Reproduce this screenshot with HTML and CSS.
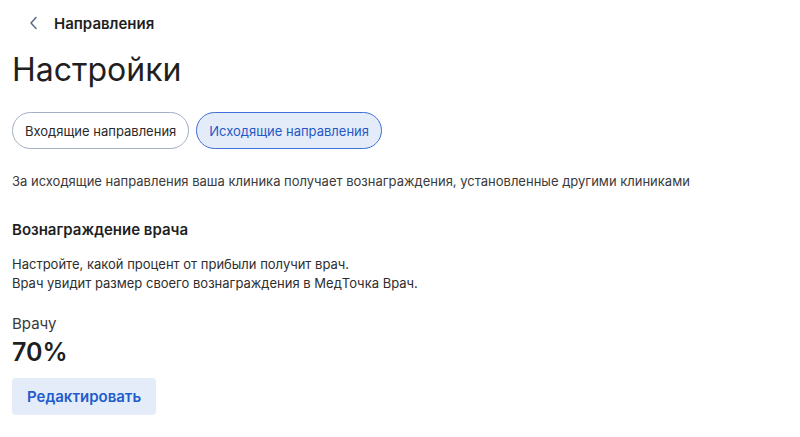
FILE: index.html
```html
<!DOCTYPE html>
<html lang="ru">
<head>
<meta charset="utf-8">
<link rel="stylesheet" href="styles.css">
</head>
<body>
<div class="page">
  <div class="topbar">
    <span class="back"><svg width="10" height="14" viewBox="0 0 10 14"><path d="M7 1.5 L2 7 L7 12.5" fill="none" stroke="#5b6b85" stroke-width="1.5" stroke-linecap="round" stroke-linejoin="round"/></svg></span>
    <span class="crumb">Направления</span>
  </div>
  <h1 class="title">Настройки</h1>
  <div class="tabs">
    <button class="tab">Входящие направления</button>
    <button class="tab active">Исходящие направления</button>
  </div>
  <p class="desc">За исходящие направления ваша клиника получает вознаграждения, установленные другими клиниками</p>
  <h2 class="section">Вознаграждение врача</h2>
  <p class="text">Настройте, какой процент от прибыли получит врач.<br>Врач увидит размер своего вознаграждения в МедТочка Врач.</p>
  <div class="label">Врачу</div>
  <div class="value">70%</div>
  <button class="edit">Редактировать</button>
</div>
</body>
</html>
```
FILE: styles.css
```css
html, body { margin: 0; padding: 0; background: #fff; }
body { font-family: Inter, "Noto Sans", sans-serif; color: #222; }
.page { padding: 0 12px; }
.topbar { display: flex; align-items: center; height: 46px; padding-left: 17px; gap: 15px; }
.back { display: flex; align-items: center; }
.crumb { font-size: 15px; font-weight: 600; color: #1f1f1f; }
.title { margin: 4px 0 0; font-size: 32px; font-weight: 400; line-height: 40px; color: #1f1f1f; }
.tabs { display: flex; gap: 7px; margin-top: 22px; }
.tab { font-family: inherit; font-size: 13px; height: 37px; padding: 0 12px; border-radius: 19px; border: 1px solid #a3afc4; background: #fff; color: #2a2a2a; }
.tab.active { border-color: #3d6fd6; background: #e4ecf9; color: #2459c4; }
.desc { margin: 22px 0 0; font-size: 13px; line-height: 20px; color: #3a3a3a; }
.section { margin: 29px 0 0; font-size: 15px; font-weight: 600; line-height: 20px; color: #1f1f1f; }
.text { margin: 15px 0 0; font-size: 13px; line-height: 19px; color: #2e2e2e; }
.label { margin-top: 21px; font-size: 15px; line-height: 20px; color: #3a3a3a; }
.value { margin-top: 3px; font-size: 25px; font-weight: 600; line-height: 30px; color: #1f1f1f; }
.edit { margin-top: 11px; font-family: inherit; font-size: 15px; font-weight: 600; color: #1f5bcc; background: #e4ecf9; border: none; border-radius: 4px; height: 37px; padding: 0 15px; }
```
